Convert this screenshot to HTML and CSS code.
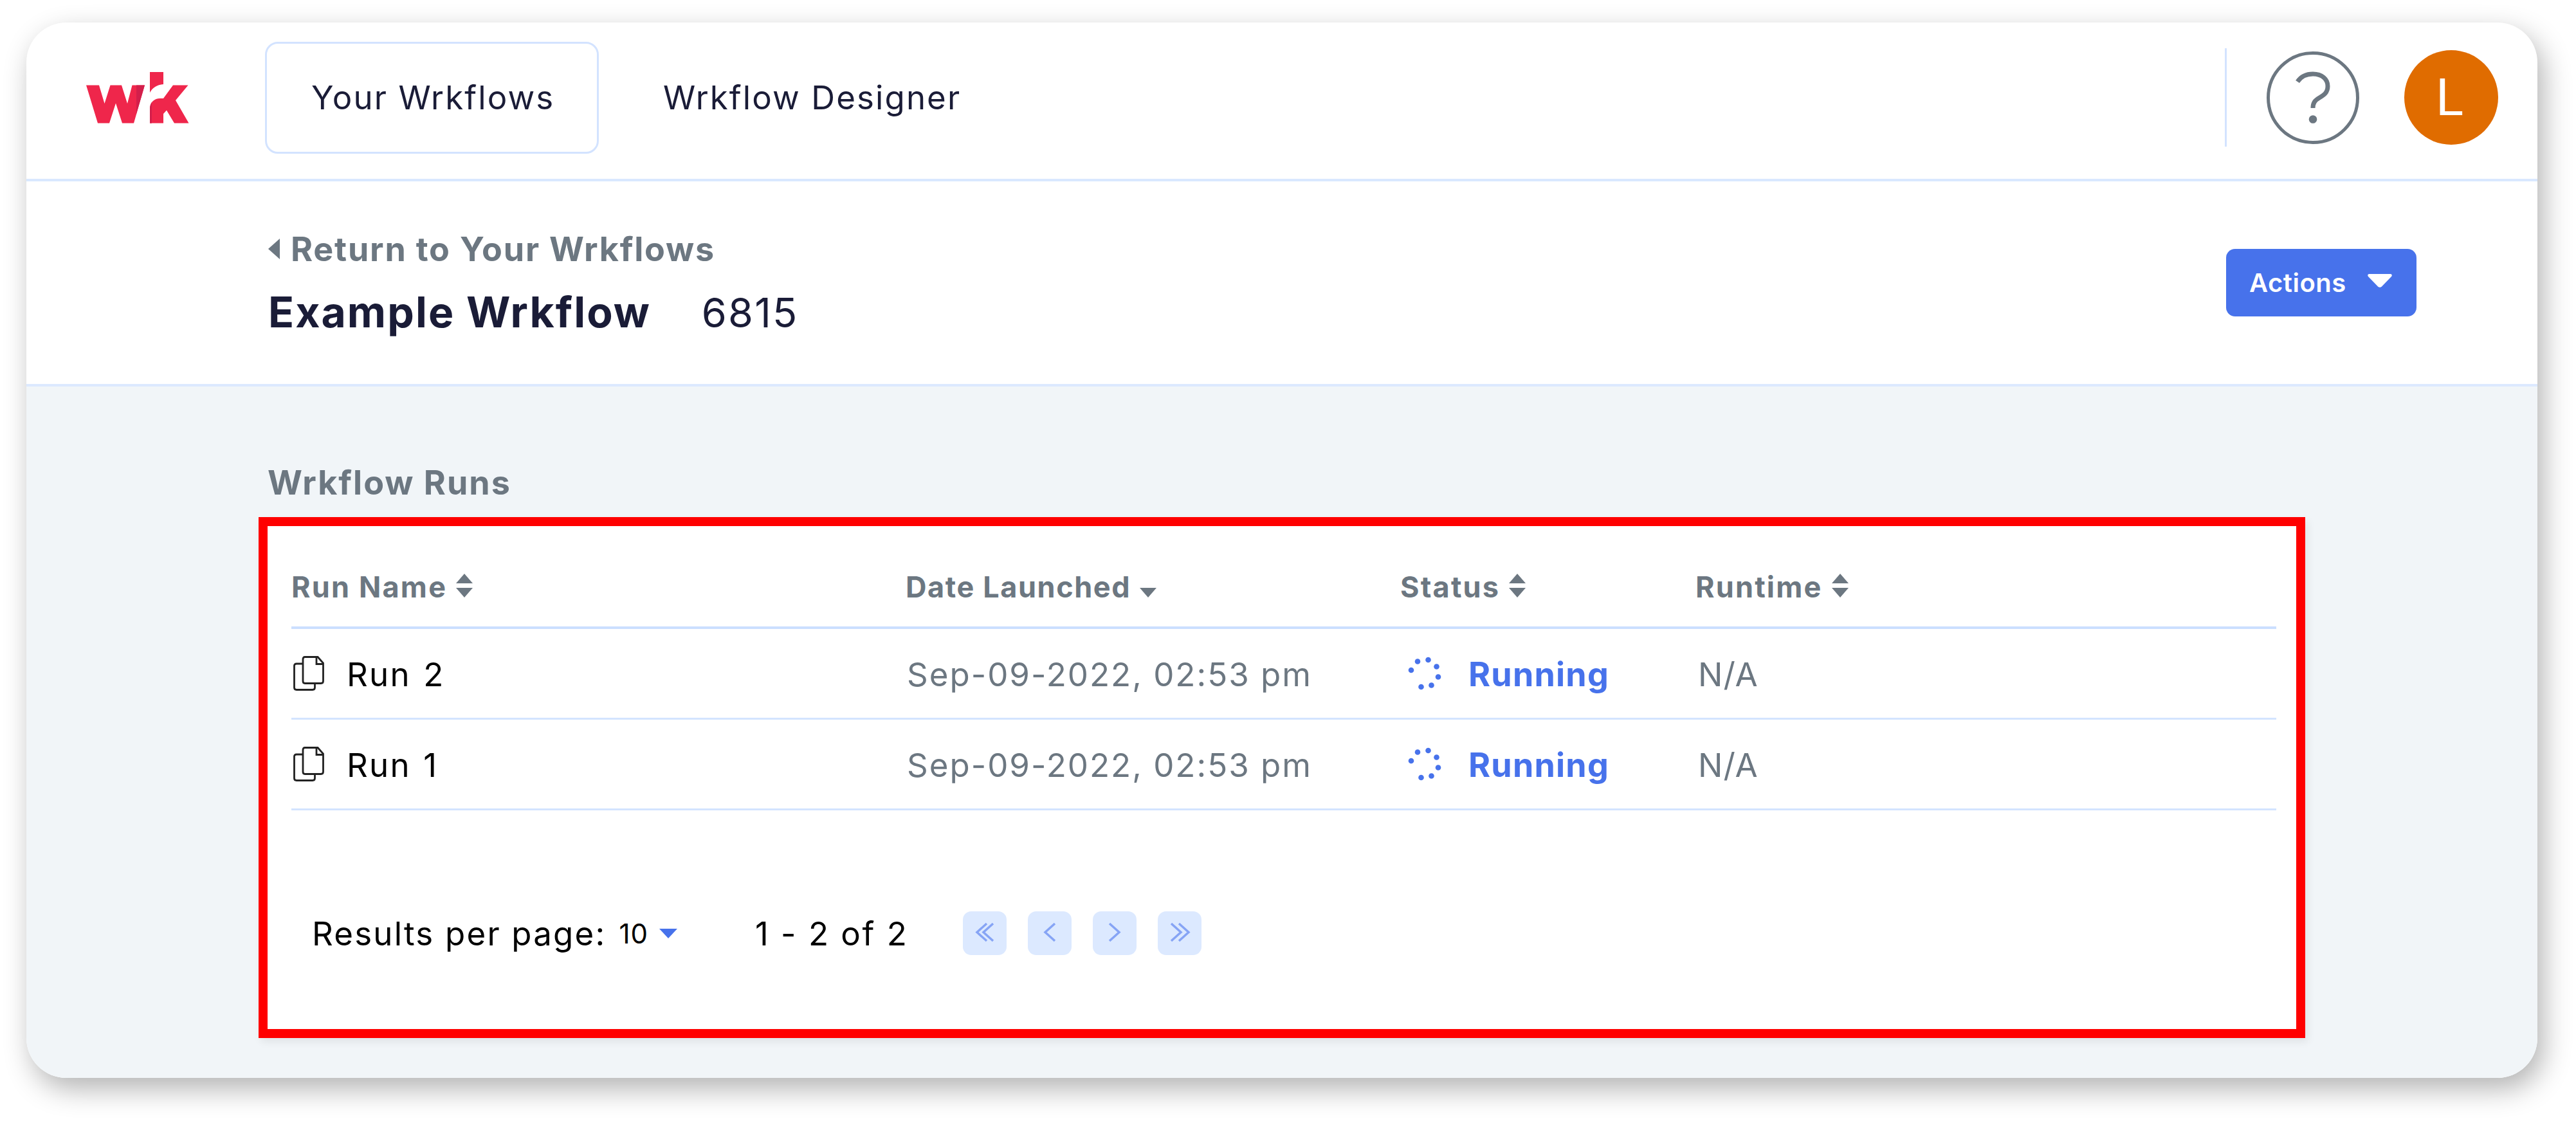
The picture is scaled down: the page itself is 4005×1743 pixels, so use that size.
FILE: index.html
```html
<!DOCTYPE html>
<html lang="en">

  <head>
    <meta charset="UTF-8">
    <meta name="viewport" content="width=device-width, initial-scale=1.0">
    <title>Your Wrkflows</title>
    <link rel="stylesheet" href="styles.css">
  </head>

  <body>
    <div class="window">
      <header class="topbar">
        <svg class="logo" viewBox="0 0 160 80">
          <path fill="#ef264b" d="M0 20.5H20L28.5 49L37.5 20.5H55L64 49L71.5 20.5H91L74 79.500H56L46 48.500L36 79.500H18Z"/>
          <path fill="#d31f4b" d="M78 20.500H91L78 65Z"/>
          <path fill="#ef264b" d="M99 0H120V19C110 20 103 24 99 32Z"/>
          <path fill="#ef264b" d="M99 79.500V57C99 47 106 41 115 41H120L135 20.500H158.500L139 44L159.500 79.500H137L125 59.500L120 65V79.500Z"/>
          <path fill="#d31f4b" d="M99 79.500V57C99 53 100 50 102 47V79.500Z"/>
        </svg>
        <nav class="nav">
          <a class="nav-link active">Your Wrkflows</a>
          <a class="nav-link designer">Wrkflow Designer</a>
        </nav>
        <div class="user-area">
          <svg class="help-icon" viewBox="0 0 144 144">
            <circle cx="72" cy="72" r="69.500"/>
            <path d="M48 47C54 38 63 35 72 35C86 35 95 43 95 54C95 64 89 68 82 72C75 76 72 80 72 88"/>
            <circle class="dot" cx="72" cy="105.500" r="6.300"/>
          </svg>
          <div class="avatar">L</div>
        </div>
      </header>

      <section class="subheader">
        <div class="titles">
          <a class="return-link"><svg class="back-caret" viewBox="0 0 18 32"><path d="M18 0V32L0 16Z"/></svg>Return to Your Wrkflows</a>
          <h1 class="title">Example Wrkflow <span class="title-id">6815</span></h1>
        </div>
        <button class="actions-button">Actions
          <svg class="actions-caret" viewBox="0 0 38 21"><path d="M2 0H36Q39 1 37 4L22 19.500Q19 22 16 19.500L1 4Q-1 1 2 0Z"/></svg>
        </button>
      </section>

      <main class="content">
        <h2 class="section-title">Wrkflow Runs</h2>
        <div class="panel">
          <div class="row head">
            <div class="cell">Run Name <svg class="sort" viewBox="0 0 26 37"><path d="M0 15L13 0L26 15ZM0 22H26L13 37Z"/></svg></div>
            <div class="cell date-head">Date Launched <svg class="sort" viewBox="0 0 26 37"><path d="M0 22H26L13 37Z"/></svg></div>
            <div class="cell">Status <svg class="sort" viewBox="0 0 26 37"><path d="M0 15L13 0L26 15ZM0 22H26L13 37Z"/></svg></div>
            <div class="cell">Runtime <svg class="sort" viewBox="0 0 26 37"><path d="M0 15L13 0L26 15ZM0 22H26L13 37Z"/></svg></div>
          </div>

          <div class="row">
            <div class="cell run-name">
              <svg class="copy" viewBox="0 0 48 54"><path d="M15 12H5Q1.500 12 1.500 15V49Q1.500 52.500 5 52.500H30Q33.500 52.500 33.500 49V43"/><path d="M18 1.500H38L46.500 11V39Q46.500 42.500 43 42.500H18Q15 42.500 15 39V5Q15 1.500 18 1.500Z"/><path d="M36 2V12.500H46"/></svg>
              Run 2
            </div>
            <div class="cell date">Sep-09-2022, 02:53 pm</div>
            <div class="cell status">
              <svg class="spinner" viewBox="0 0 52 52"><circle cx="5" cy="21" r="4.300"/><circle cx="15" cy="7.500" r="4.300"/><circle cx="31.500" cy="5" r="4.300"/><circle cx="44.500" cy="15.500" r="4.300"/><circle cx="47" cy="31.500" r="4.300"/><circle cx="36.500" cy="44.500" r="4.300"/><circle cx="20.500" cy="47" r="4.300"/></svg>
              Running
            </div>
            <div class="cell runtime">N/A</div>
          </div>

          <div class="row">
            <div class="cell run-name">
              <svg class="copy" viewBox="0 0 48 54"><path d="M15 12H5Q1.500 12 1.500 15V49Q1.500 52.500 5 52.500H30Q33.500 52.500 33.500 49V43"/><path d="M18 1.500H38L46.500 11V39Q46.500 42.500 43 42.500H18Q15 42.500 15 39V5Q15 1.500 18 1.500Z"/><path d="M36 2V12.500H46"/></svg>
              Run 1
            </div>
            <div class="cell date">Sep-09-2022, 02:53 pm</div>
            <div class="cell status">
              <svg class="spinner" viewBox="0 0 52 52"><circle cx="5" cy="21" r="4.300"/><circle cx="15" cy="7.500" r="4.300"/><circle cx="31.500" cy="5" r="4.300"/><circle cx="44.500" cy="15.500" r="4.300"/><circle cx="47" cy="31.500" r="4.300"/><circle cx="36.500" cy="44.500" r="4.300"/><circle cx="20.500" cy="47" r="4.300"/></svg>
              Running
            </div>
            <div class="cell runtime">N/A</div>
          </div>

          <div class="pager">
            <span class="per-page">Results per page:</span>
            <span class="page-size">10</span>
            <svg class="size-caret" viewBox="0 0 28 15"><path d="M0 0H28L14 15Z"/></svg>
            <span class="range">1 - 2 of 2</span>
            <div class="page-buttons">
              <button class="page-button"><svg viewBox="0 0 68 68"><path d="M37 19L22 32.500L37 46M47 19L32 32.500L47 46"/></svg></button>
              <button class="page-button"><svg viewBox="0 0 68 68"><path d="M42 19L27 32.500L42 46"/></svg></button>
              <button class="page-button"><svg viewBox="0 0 68 68"><path d="M26 19L41 32.500L26 46"/></svg></button>
              <button class="page-button"><svg viewBox="0 0 68 68"><path d="M21 19L36 32.500L21 46M33 19L48 32.500L33 46"/></svg></button>
            </div>
          </div>
        </div>
      </main>
    </div>
  </body>

</html>
```
FILE: styles.css
```css
* {
  box-sizing: border-box;
}

body {
  margin: 0;
  padding: 35px 60px 0 41px;
  height: 1743px;
  overflow: hidden;
  background-color: #fff;
  color: #1a1c37;
  font-family: Inter, 'Liberation Sans', sans-serif;
  font-size: 51px;
  white-space: nowrap;
}

.window {
  height: 1641px;
  border-radius: 62px;
  overflow: hidden;
  background-color: #fff;
  box-shadow: 9px 17px 44px rgba(0, 0, 0, 0.3);
}

/* Top navigation */
.topbar {
  display: flex;
  align-items: center;
  height: 247px;
  padding: 0 61px 10px 93px;
  border-bottom: 4px solid #d9e8ff;
}

.logo {
  width: 160px;
  height: 80px;
  margin-right: 118px;
}

.nav {
  display: flex;
  align-items: center;
}

.nav-link {
  letter-spacing: 2.1px;
}

.nav-link.active {
  width: 519px;
  height: 174px;
  line-height: 168px;
  padding-left: 69px;
  border: 3px solid #d3e3ff;
  border-radius: 20px;
}

.nav-link.designer {
  margin-left: 100px;
}

.user-area {
  display: flex;
  align-items: center;
  height: 153px;
  margin-left: auto;
  padding-left: 62px;
  border-left: 3px solid #d3e3ff;
}

.help-icon {
  width: 144px;
  height: 144px;
  margin-right: 70px;
  fill: none;
  stroke: #6c7781;
  stroke-width: 5px;
}

.help-icon path {
  stroke-width: 7px;
}

.help-icon .dot {
  fill: #6c7781;
  stroke: none;
}

.avatar {
  width: 146px;
  height: 147px;
  padding-right: 5px;
  border-radius: 50%;
  background-color: #e06c00;
  color: #fff;
  font-family: Roboto, sans-serif;
  font-size: 80px;
  line-height: 148px;
  text-align: center;
}

/* Workflow title bar */
.subheader {
  display: flex;
  align-items: center;
  justify-content: space-between;
  height: 319px;
  padding: 0 188px 0 376px;
  border-bottom: 4px solid #dce9ff;
}

.titles {
  padding-bottom: 6px;
}

.return-link {
  display: flex;
  align-items: center;
  height: 98px;
  color: #6c7781;
  font-size: 52px;
  font-weight: 700;
  letter-spacing: 1.8px;
}

.back-caret {
  width: 18px;
  height: 32px;
  margin-right: 17px;
  fill: #6c7781;
}

.title {
  margin: 0;
  font-size: 66px;
  line-height: 98px;
  letter-spacing: 2.1px;
}

.title-id {
  margin-left: 61px;
  font-weight: 400;
  font-size: 63px;
  letter-spacing: 2.2px;
}

.actions-button {
  display: flex;
  align-items: center;
  width: 296px;
  height: 105px;
  padding: 0 38px 0 36px;
  justify-content: space-between;
  border: none;
  border-radius: 14px;
  background-color: #4772eb;
  color: #fff;
  font: 600 40px Inter, sans-serif;
  letter-spacing: 0.5px;
}

.actions-caret {
  width: 38px;
  height: 21px;
  margin-bottom: 6px;
  fill: #fff;
}

/* Runs table */
.content {
  height: 1075px;
  padding: 97px 361px 0 361px;
  background-color: #f1f5f8;
}

.section-title {
  margin: 0 0 0 14px;
  color: #6c7781;
  font-size: 52px;
  line-height: 106px;
  letter-spacing: 2px;
}

.panel {
  height: 810px;
  padding: 32px 31px 0 37px;
  border: 14px solid #f00;
  background-color: #fff;
  box-shadow: 4px 6px 12px rgba(0, 0, 0, 0.07);
}

.row {
  display: grid;
  grid-template-columns: 955px 769px 459px 1fr;
  height: 141px;
  padding-top: 3px;
  border-bottom: 3px solid #d3e4ff;
}

.row.head {
  height: 128px;
  padding: 0;
  border-bottom: 4px solid #cbdfff;
  color: #6c7781;
  font-size: 45px;
  font-weight: 700;
  letter-spacing: 2.2px;
}

.row.head .date-head {
  letter-spacing: 1.6px;
}

.cell {
  display: flex;
  align-items: center;
}

.sort {
  width: 26px;
  height: 37px;
  margin: 0 0 4px 14px;
  fill: #6c7781;
}

.run-name {
  color: #000;
  letter-spacing: 2.2px;
  word-spacing: 3px;
}

.copy {
  width: 48px;
  height: 54px;
  margin: 0 35px 4px 3px;
  fill: none;
  stroke: #222;
  stroke-width: 2.800px;
}

.date,
.runtime {
  padding-left: 2px;
  color: #6c7781;
  letter-spacing: 2px;
}

.runtime {
  padding-left: 4px;
  letter-spacing: 1px;
}

.status {
  color: #4772eb;
  font-size: 52px;
  font-weight: 700;
  letter-spacing: 1.2px;
}

.spinner {
  width: 52px;
  height: 52px;
  margin: 0 42px 4px 12px;
  fill: #4772eb;
}

/* Pagination */
.pager {
  display: flex;
  align-items: center;
  height: 68px;
  margin-top: 157px;
  padding-left: 32px;
  color: #000;
  letter-spacing: 2.2px;
}

.page-size {
  margin: 0 17px 0 20px;
  font-size: 42px;
  letter-spacing: 1px;
}

.size-caret {
  width: 28px;
  height: 15px;
  fill: #4772eb;
}

.range {
  margin-left: 121px;
  letter-spacing: 2.5px;
}

.page-buttons {
  display: flex;
  gap: 33px;
  margin-left: 85px;
}

.page-button {
  width: 68px;
  height: 68px;
  padding: 0;
  border: none;
  border-radius: 13px;
  background-color: #dce9ff;
}

.page-button svg {
  display: block;
  fill: none;
  stroke: #86a4f5;
  stroke-width: 3.500px;
}
```
